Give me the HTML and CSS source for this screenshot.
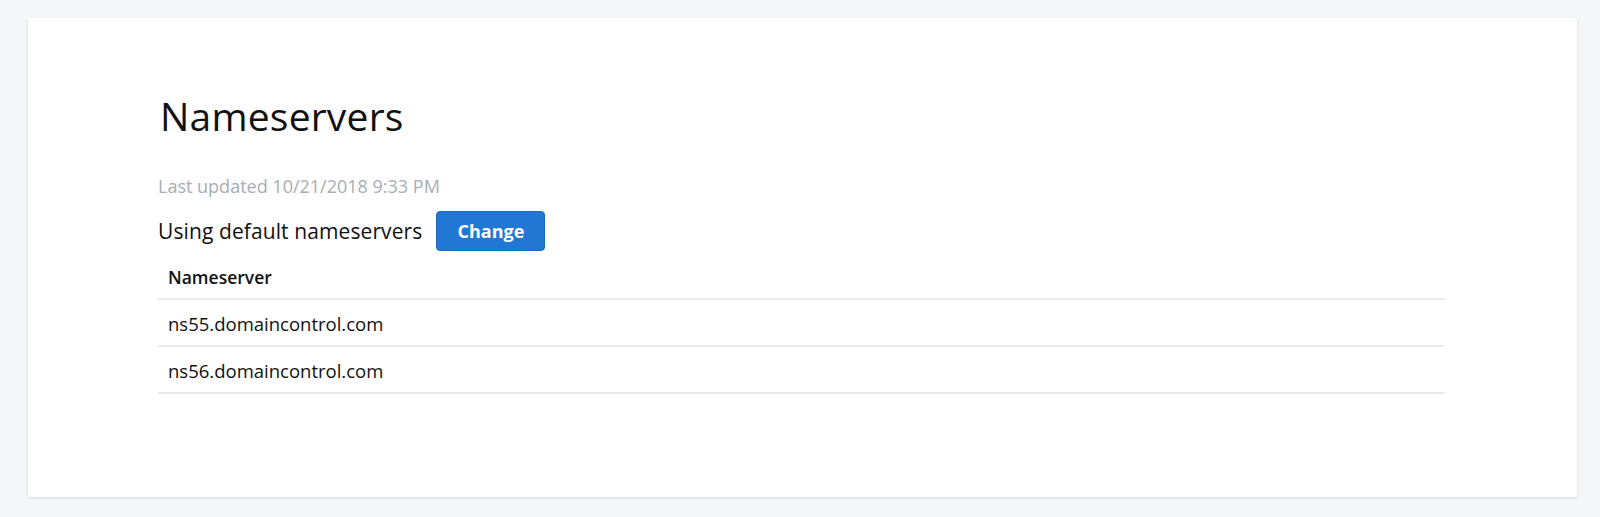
FILE: index.html
```html
<!DOCTYPE html>
<html>
<head>
<meta charset="utf-8">
<link rel="stylesheet" href="styles.css">
</head>
<body>
<div class="page">
  <section class="card">
    <h1 class="title">Nameservers</h1>
    <div class="updated">Last updated 10/21/2018 9:33 PM</div>
    <div class="status">
      <span class="status-text">Using default nameservers</span>
      <button class="btn">Change</button>
    </div>
    <table class="ns-table">
      <thead>
        <tr><th>Nameserver</th></tr>
      </thead>
      <tbody>
        <tr><td>ns55.domaincontrol.com</td></tr>
        <tr><td>ns56.domaincontrol.com</td></tr>
      </tbody>
    </table>
  </section>
</div>
</body>
</html>
```

FILE: styles.css
```css
html, body {
  margin: 0;
  padding: 0;
  background: #f5f6f8;
  font-family: "Open Sans", "Noto Sans", sans-serif;
  color: #111;
}
.page {
  padding: 18px 23px 20px 28px;
}
.card {
  background: #fff;
  box-shadow: 0 1px 3px rgba(0, 0, 0, 0.13);
  padding: 73px 132px 103px 130px;
}
.title {
  margin: 0;
  font-size: 39px;
  line-height: 50px;
  font-weight: 400;
  letter-spacing: 0.2px;
  padding-left: 2px;
}
.updated {
  margin-top: 33px;
  font-size: 18px;
  line-height: 24px;
  color: #a7adb5;
}
.status {
  margin-top: 13px;
  display: flex;
  align-items: center;
  gap: 14px;
}
.status-text {
  font-size: 21px;
  line-height: 24px;
  letter-spacing: 0.1px;
}
.btn {
  height: 40px;
  width: 109px;
  border: 1px solid #1b6cc2;
  border-radius: 4px;
  background: #2177d3;
  color: #fff;
  font-family: inherit;
  font-size: 18px;
  font-weight: 700;
  padding: 0;
}
.ns-table {
  width: 100%;
  border-collapse: collapse;
  margin-top: 14px;
}
.ns-table th,
.ns-table td {
  text-align: left;
  padding: 0 10px;
  line-height: 24px;
  border-bottom: 2px solid #ebebeb;
}
.ns-table th {
  font-size: 17.5px;
  font-weight: 600;
  padding-top: 0;
  padding-bottom: 9px;
}
.ns-table td {
  font-size: 18.5px;
  font-weight: 400;
  padding-top: 12px;
  padding-bottom: 9px;
}
```
